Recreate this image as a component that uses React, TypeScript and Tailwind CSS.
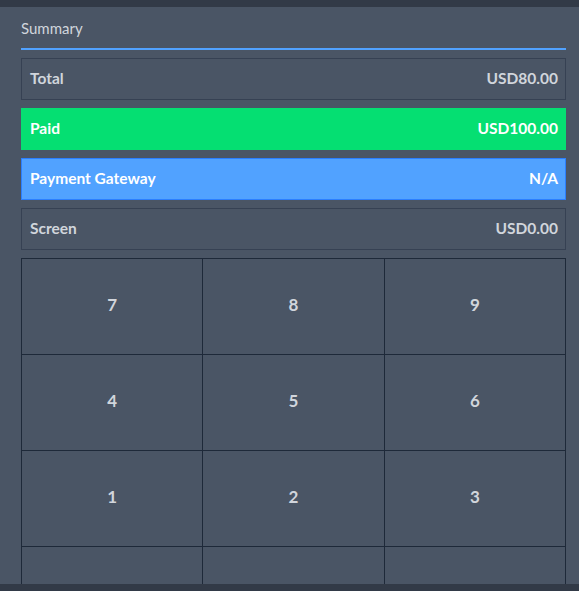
const rows = [
  { label: "Total", value: "USD80.00", cls: "border-gray-700 text-gray-300" },
  { label: "Paid", value: "USD100.00", cls: "bg-green-400 border-green-400 text-white" },
  { label: "Payment Gateway", value: "N/A", cls: "bg-blue-400 border-blue-500 text-white" },
  { label: "Screen", value: "USD0.00", cls: "border-gray-700 text-gray-300" },
];

const keys = ["7", "8", "9", "4", "5", "6", "1", "2", "3", "", "", ""];

export default function App() {
  return (
    <div className="w-[579px] h-[591px] flex flex-col bg-[#323a47] font-['Lato',sans-serif]">
      <div className="h-[7px] shrink-0" />
      <div className="h-[577px] bg-gray-600 overflow-hidden px-[21px] pt-[11px] pr-[13px]">
        {/* Summary header */}
        <div className="border-b-2 border-blue-400 pb-[10px]">
          <h2 className="text-[15px] leading-5 text-gray-300">Summary</h2>
        </div>

        {/* Totals */}
        <div className="mt-2 flex flex-col gap-2">
          {rows.map((r) => (
            <div
              key={r.label}
              className={`h-[42px] flex items-center justify-between border pl-2 pr-[7px] text-[15.5px] font-bold ${r.cls}`}
            >
              <span>{r.label}</span>
              <span>{r.value}</span>
            </div>
          ))}
        </div>

        {/* Keypad */}
        <div className="mt-2 grid grid-cols-3 border-l border-t border-gray-800">
          {keys.map((k, i) => (
            <button
              key={i}
              className="h-[96px] pb-[3px] border-r border-b border-gray-800 text-[17px] font-bold text-gray-300"
            >
              {k}
            </button>
          ))}
        </div>
      </div>
    </div>
  );
}
